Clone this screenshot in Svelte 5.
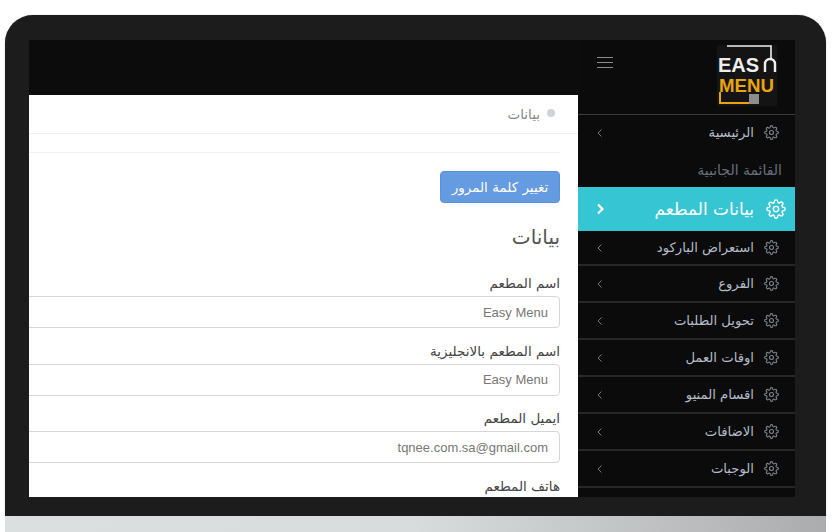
<script>
  const items = ['استعراض الباركود', 'الفروع', 'تحويل الطلبات', 'اوقات العمل', 'اقسام المنيو', 'الاضافات', 'الوجبات'];
  const fields = [
    { label: 'اسم المطعم', value: 'Easy Menu' },
    { label: 'اسم المطعم بالانجليزية', value: 'Easy Menu' },
    { label: 'ايميل المطعم', value: 'tqnee.com.sa@gmail.com' }
  ];
</script>

{#snippet gear(size)}
  <svg class="gear" width={size} height={size} viewBox="0 0 24 24" fill="none" stroke="currentColor" stroke-width="1.7" stroke-linejoin="round">
    <circle cx="12" cy="12" r="3.2" />
    <path d="M19.4 15a1.65 1.65 0 0 0 .33 1.82l.06.06a2 2 0 1 1-2.83 2.83l-.06-.06a1.65 1.65 0 0 0-2.82 1.17V21a2 2 0 1 1-4 0v-.09a1.65 1.65 0 0 0-2.82-1.12l-.06.06a2 2 0 1 1-2.83-2.83l.06-.06a1.65 1.65 0 0 0-1.17-2.82H3a2 2 0 1 1 0-4h.09a1.65 1.65 0 0 0 1.12-2.82l-.06-.06a2 2 0 1 1 2.83-2.83l.06.06a1.65 1.65 0 0 0 1.82.33H9a1.65 1.65 0 0 0 1-1.51V3a2 2 0 1 1 4 0v.09a1.65 1.65 0 0 0 2.82 1.12l.06-.06a2 2 0 1 1 2.83 2.83l-.06.06a1.65 1.65 0 0 0-.33 1.82V9a1.65 1.65 0 0 0 1.51 1H21a2 2 0 1 1 0 4h-.09a1.65 1.65 0 0 0-1.51 1z" />
  </svg>
{/snippet}

{#snippet chevron(points, width)}
  <svg class="chev" width="10" height="12" viewBox="0 0 10 12" fill="none" stroke="currentColor" stroke-width={width}>
    <path d={points} />
  </svg>
{/snippet}

<div class="page">
  <div class="frame">
    <div class="screen">
      <div class="main">
        <div class="topbar">
          <div class="burger"><i></i><i></i><i></i></div>
        </div>
        <div class="panel" dir="rtl">
          <div class="crumb"><span class="dot"></span><span>بيانات</span></div>
          <div class="body">
            <button class="btn">تغيير كلمة المرور</button>
            <h2>بيانات</h2>
            {#each fields as f}
              <div class="field">
                <div class="lbl">{f.label}</div>
                <input class="inp" readonly value={f.value} />
              </div>
            {/each}
            <div class="lbl">هاتف المطعم</div>
          </div>
        </div>
      </div>
      <aside class="side" dir="rtl">
        <div class="logo" dir="ltr">
          <svg width="60" height="61" viewBox="0 0 60 61">
            <rect width="60" height="61" fill="#141414" />
            <path d="M10 1H54V14" fill="none" stroke="#eee" stroke-width="1.6" />
            <path d="M48 27V19a5 5 0 0 1 10 0V27" fill="none" stroke="#eee" stroke-width="2.4" />
            <text x="1" y="27" class="l-top">EAS</text>
            <text x="2" y="47" class="l-bot">MENU</text>
            <path d="M3 47V58H33" fill="none" stroke="#e9a50f" stroke-width="2" />
            <rect x="32" y="49" width="10" height="10" fill="#8d8d8d" />
          </svg>
        </div>
        <div class="row home">
          {@render gear(15)}<span class="txt">الرئيسية</span>{@render chevron('M6.5 2.5L3 6l3.5 3.5', 1)}
        </div>
        <div class="heading">القائمة الجانبية</div>
        <div class="row active">
          {@render gear(20)}<span class="txt">بيانات المطعم</span>{@render chevron('M3 1.5L7.5 6 3 10.5', 2.2)}
        </div>
        {#each items as item, i}
          <div class="row item" class:first={i === 0}>
            {@render gear(15)}<span class="txt">{item}</span>{@render chevron('M6.5 2.5L3 6l3.5 3.5', 1)}
          </div>
        {/each}
      </aside>
    </div>
  </div>
  <div class="desk"></div>
</div>

<style>
  :global(body) {
    margin: 0;
    background: #fff;
  }

  .page {
    width: 836px;
    height: 532px;
    overflow: hidden;
    position: relative;
    font-family: "DejaVu Sans", "Noto Sans", sans-serif;
  }

  .frame {
    margin: 15px 0 0 5px;
    width: 821px;
    height: 501px;
    box-sizing: border-box;
    padding: 25px 31px 19px 24px;
    background: #1c1c1c;
    border-radius: 28px 28px 0 0;
    box-shadow: 0 0 1px #777;
  }

  .desk {
    margin-left: 5px;
    width: 821px;
    height: 16px;
    background: linear-gradient(90deg, #dcdfe0 0%, #d8dcdc 50%, #b9bbbc 85%, #aaacae 100%);
  }

  .screen {
    display: flex;
    height: 457px;
    background: #0c0c0c;
  }

  .main {
    width: 549px;
    display: flex;
    flex-direction: column;
  }

  .topbar {
    height: 55px;
    flex: none;
    position: relative;
  }

  .burger {
    position: absolute;
    right: -35px;
    top: 17px;
    width: 16px;
    display: flex;
    flex-direction: column;
    gap: 4px;
  }

  .burger i {
    height: 1px;
    background: #8a8a8a;
  }

  .panel {
    flex: 1;
    background: #fff;
    overflow: hidden;
    min-height: 0;
  }

  .crumb {
    height: 39px;
    box-sizing: border-box;
    display: flex;
    align-items: center;
    gap: 7px;
    padding-right: 23px;
    font-size: 13.5px;
    color: #888;
    border-bottom: 1px solid #eef1f5;
  }

  .dot {
    width: 8px;
    height: 8px;
    border-radius: 50%;
    background: #d0d3d6;
    margin-top: -3px;
  }

  .body {
    margin-top: 18px;
    border-top: 1px solid #eef1f5;
    margin-right: 18px;
    padding-top: 18px;
  }

  .btn {
    display: block;
    width: 120px;
    height: 32px;
    padding: 0;
    background: #659be0;
    border: 1px solid #5a92da;
    border-radius: 4px;
    color: #fff;
    font-family: inherit;
    font-size: 13.5px;
  }

  h2 {
    margin: 20px 0 22px;
    font-size: 20px;
    line-height: 28px;
    font-weight: 400;
    color: #555;
  }

  .field {
    margin-bottom: 12.5px;
  }

  .lbl {
    font-size: 13.5px;
    line-height: 20px;
    color: #444;
    margin-bottom: 3px;
  }

  .inp {
    display: block;
    box-sizing: border-box;
    width: 700px;
    height: 32px;
    padding: 0 11px;
    border: 1px solid #d3d7dc;
    border-radius: 4px;
    background: #fff;
    color: #777;
    font: 13px "Liberation Sans", sans-serif;
    outline: none;
  }

  .side {
    width: 217px;
    background: #0b0b0b;
    overflow: hidden;
  }

  .logo {
    height: 75px;
    box-sizing: border-box;
    padding: 5px 0 0 139px;
    border-bottom: 1px solid #3a3d40;
  }

  .logo svg {
    display: block;
  }

  .l-top,
  .l-bot {
    font-family: "Liberation Sans", sans-serif;
    font-weight: 700;
  }

  .l-top {
    fill: #eee;
    font-size: 20px;
  }

  .l-bot {
    fill: #e9a50f;
    font-size: 18.7px;
  }

  .row {
    display: flex;
    align-items: center;
    color: #b4bcc8;
    font-size: 13.2px;
    padding: 0 16px 0 0;
    box-sizing: border-box;
  }

  .gear {
    flex: none;
    color: #7f8790;
  }

  .txt {
    flex: 1;
    padding-right: 10px;
    white-space: nowrap;
  }

  .chev {
    flex: none;
    margin-left: 17px;
    color: #777;
  }

  .home {
    height: 35px;
  }

  .heading {
    height: 37px;
    line-height: 41px;
    padding-right: 13px;
    font-size: 14px;
    color: #68707a;
  }

  .active {
    height: 44px;
    background: #36c6d3;
    color: #fff;
    font-size: 17px;
    padding-right: 9px;
  }

  .active .gear,
  .active .chev {
    color: #fff;
  }

  .active .txt {
    padding-right: 12px;
  }

  .item {
    height: 37px;
    border-bottom: 2px solid #272727;
  }

  .item.first {
    height: 35px;
  }
</style>
